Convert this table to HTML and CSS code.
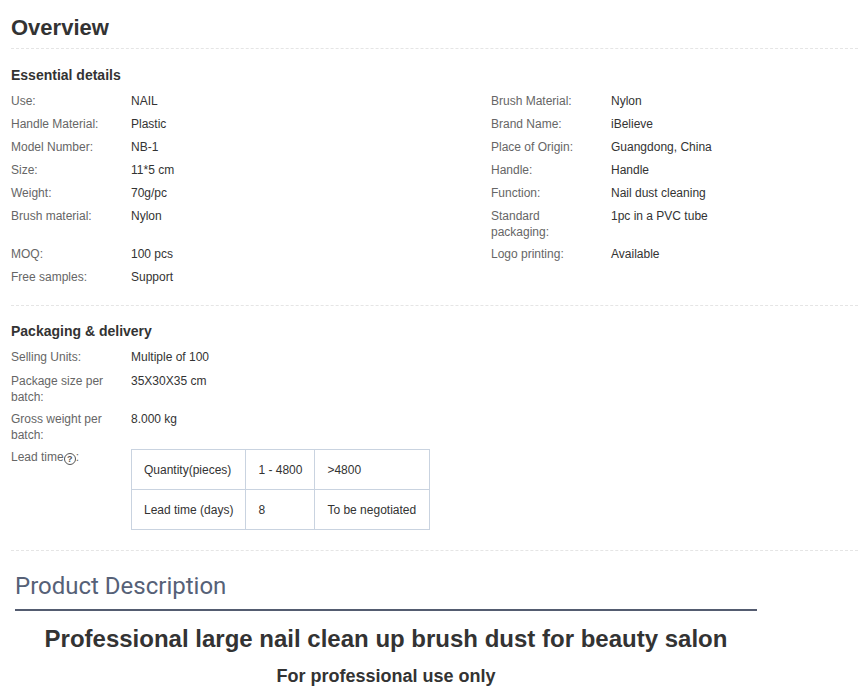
FILE: index.html
```html
<!DOCTYPE html>
<html>
<head>
<meta charset="utf-8">
<link rel="stylesheet" href="styles.css">
</head>
<body>
<div class="page">
  <h1 class="title">Overview</h1>
  <div class="section">
    <h2 class="sub">Essential details</h2>
    <div class="grid">
      <div class="col">
        <div class="row"><span class="lbl">Use:</span><span class="val">NAIL</span></div>
        <div class="row"><span class="lbl">Handle Material:</span><span class="val">Plastic</span></div>
        <div class="row"><span class="lbl">Model Number:</span><span class="val">NB-1</span></div>
        <div class="row"><span class="lbl">Size:</span><span class="val">11*5 cm</span></div>
        <div class="row"><span class="lbl">Weight:</span><span class="val">70g/pc</span></div>
        <div class="row tall"><span class="lbl">Brush material:</span><span class="val">Nylon</span></div>
        <div class="row"><span class="lbl">MOQ:</span><span class="val">100 pcs</span></div>
        <div class="row"><span class="lbl">Free samples:</span><span class="val">Support</span></div>
      </div>
      <div class="col">
        <div class="row"><span class="lbl">Brush Material:</span><span class="val">Nylon</span></div>
        <div class="row"><span class="lbl">Brand Name:</span><span class="val">iBelieve</span></div>
        <div class="row"><span class="lbl">Place of Origin:</span><span class="val">Guangdong, China</span></div>
        <div class="row"><span class="lbl">Handle:</span><span class="val">Handle</span></div>
        <div class="row"><span class="lbl">Function:</span><span class="val">Nail dust cleaning</span></div>
        <div class="row two"><span class="lbl">Standard packaging:</span><span class="val">1pc in a PVC tube</span></div>
        <div class="row"><span class="lbl">Logo printing:</span><span class="val">Available</span></div>
      </div>
    </div>
  </div>
  <div class="section pack">
    <h2 class="sub">Packaging &amp; delivery</h2>
    <div class="col">
      <div class="row wide"><span class="lbl">Selling Units:</span><span class="val">Multiple of 100</span></div>
      <div class="row two"><span class="lbl">Package size per batch:</span><span class="val">35X30X35 cm</span></div>
      <div class="row two"><span class="lbl">Gross weight per batch:</span><span class="val">8.000 kg</span></div>
      <div class="row"><span class="lbl">Lead time<span class="help">?</span>:</span>
        <table class="lead">
          <tr><td class="c1">Quantity(pieces)</td><td class="c2">1 - 4800</td><td class="c3">&gt;4800</td></tr>
          <tr><td class="c1">Lead time (days)</td><td class="c2">8</td><td class="c3">To be negotiated</td></tr>
        </table>
      </div>
    </div>
  </div>
  <div class="desc">
    <h2 class="desc-title">Product Description</h2>
    <p class="headline">Professional large nail clean up brush dust for beauty salon</p>
    <p class="tagline">For professional use only</p>
  </div>
</div>
</body>
</html>
```
FILE: styles.css
```css
* { box-sizing: border-box; }
body {
  margin: 0;
  background: #fff;
  font-family: "Liberation Sans", Arial, sans-serif;
  color: #333;
}
.page {
  padding: 13px 2px 0 11px;
}
.title {
  margin: 0;
  font-size: 22px;
  line-height: 30px;
  font-weight: bold;
  color: #333;
  padding-bottom: 5px;
  border-bottom: 1px dashed #e5e5e5;
}
.section {
  padding: 18px 0 13px;
  border-bottom: 1px dashed #e5e5e5;
}
.section.pack { padding-top: 17px; padding-bottom: 13px; }
.sub {
  margin: 0 0 10px;
  font-size: 14px;
  line-height: 16px;
  font-weight: bold;
  color: #333;
}
.grid {
  display: grid;
  grid-template-columns: 480px 1fr;
}
.col { display: flex; flex-direction: column; }
.row {
  display: flex;
  font-size: 12px;
  line-height: 16px;
  margin-bottom: 7px;
}
.row.wide { margin-bottom: 8px; }
.row.two { margin-bottom: 6px; }
.row.tall { margin-bottom: 22px; }
.lbl {
  width: 120px;
  flex: none;
  padding-right: 14px;
  color: #666;
}
.val { color: #333; }
.help {
  display: inline-block;
  width: 12px;
  height: 12px;
  border: 1px solid #555;
  border-radius: 50%;
  font-size: 9px;
  font-weight: bold;
  line-height: 10px;
  text-align: center;
  vertical-align: -1px;
  color: #555;
}
.lead {
  border-collapse: collapse;
  font-size: 12px;
  color: #333;
}
.lead td {
  border: 1px solid #c9d3e0;
  height: 40px;
  padding: 0 12px;
  white-space: nowrap;
}
.lead .c1 { width: 112px; }
.lead .c2 { width: 69px; }
.lead .c3 { width: 115px; }
.desc {
  width: 742px;
  margin-left: 4px;
  padding-top: 20px;
}
.desc-title {
  margin: 0;
  font-family: Roboto, "Liberation Sans", sans-serif;
  font-weight: 400;
  font-size: 24px;
  line-height: 30px;
  color: #566177;
  padding-bottom: 8px;
  border-bottom: 2px solid #545c70;
}
.headline {
  margin: 13px 0 0;
  text-align: center;
  font-size: 24px;
  line-height: 30px;
  font-weight: bold;
  color: #333;
}
.tagline {
  margin: 10px 0 0;
  text-align: center;
  font-size: 18px;
  line-height: 24px;
  font-weight: bold;
  color: #333;
}
```
